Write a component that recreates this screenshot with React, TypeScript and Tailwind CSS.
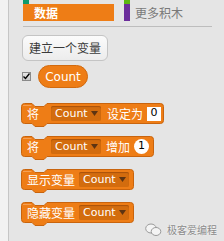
import React from 'react';

const cjk = "font-['Noto_Sans_CJK_SC',sans-serif]";
const latin = "font-['DejaVu_Sans','Noto_Sans_CJK_SC',sans-serif]";

const BlockShape: React.FC<{ w: number }> = ({ w }) => {
  const h = 21;
  const d = `M0.5,3.5 Q0.5,0.5 3.5,0.5 L11,0.5 L14,3.5 L23,3.5 L26,0.5 L${w - 3.5},0.5 Q${w - 0.5},0.5 ${w - 0.5},3.5 L${w - 0.5},${h - 3.5} Q${w - 0.5},${h - 0.5} ${w - 3.5},${h - 0.5} L26,${h - 0.5} L23,${h + 2.5} L14,${h + 2.5} L11,${h - 0.5} L3.5,${h - 0.5} Q0.5,${h - 0.5} 0.5,${h - 3.5} Z`;
  return (
    <svg className="absolute left-0 top-0" width={w} height={h + 4} viewBox={`0 0 ${w} ${h + 4}`}>
      <path d={d} fill="#ee7d16" stroke="#c9640d" strokeWidth="1" />
      <path d={`M2,2.5 L10.5,2.5`} stroke="#f5a055" strokeWidth="1" />
    </svg>
  );
};

const Dropdown: React.FC = () => (
  <div className="flex items-center justify-between w-[50px] h-[15px] rounded-[2px] bg-[#d36c0e] shadow-[inset_0_1px_1px_#a9530a] pl-[4px] pr-[3px]">
    <span className={`${latin} text-[11px] leading-none text-white`}>Count</span>
    <svg width="7" height="5" viewBox="0 0 7 5">
      <path d="M0,0 L7,0 L3.5,5 Z" fill="#5e3412" />
    </svg>
  </div>
);

const Block: React.FC<{ w: number; children: React.ReactNode }> = ({ w, children }) => (
  <div className="relative h-[25px] ml-[12px]" style={{ width: w }}>
    <BlockShape w={w} />
    <div className={`relative flex items-center h-[21px] pl-[6px] ${cjk} text-[12px] text-white`}>{children}</div>
  </div>
);

export default function App() {
  return (
    <div className="flex w-[224px] h-[241px] overflow-hidden bg-[#e5e5e5]">
      <div className="w-[8px] shrink-0 bg-[#f2f2f2] border-r border-[#c6c6c6] box-content" />
      <div className="relative flex-1 flex flex-col">
        <div className="flex h-[4px] ml-[14px]">
          <div className="w-[6px] bg-[#0e9a6c]" />
          <div className="w-[6px] ml-[95px] bg-[#5cb712]" />
        </div>
        <div className="flex h-[17px] ml-[14px]">
          <div className={`w-[91px] bg-[#ee7d16] pl-[11px] flex items-center ${cjk} text-[12px] font-bold text-white`}>数据</div>
          <div className="w-[6px] ml-[10px] bg-[#6b2d9b]" />
          <div className={`ml-[5px] flex items-center ${cjk} text-[12px] text-[#7a7a7a]`}>更多积木</div>
        </div>
        <div className="mt-[5px] ml-[14px] w-[189px] h-[1px] bg-[#bdbdbd]" />
        <button className={`mt-[8px] ml-[13px] w-[86px] h-[26px] rounded-[6px] border border-[#c4c4c4] bg-gradient-to-b from-[#fbfbfb] to-[#ececec] ${cjk} text-[12px] text-[#3a3a3a] text-left pl-[6px]`}>
          建立一个变量
        </button>
        <div className="mt-[4px] ml-[13px] flex items-center h-[23px]">
          <div className="w-[9px] h-[9px] border border-[#8a8a8a] bg-gradient-to-b from-[#e8e8e8] to-[#c8c8c8] flex items-center justify-center">
            <svg width="7" height="7" viewBox="0 0 7 7">
              <path d="M0.5,3.5 L2.5,5.5 L6.5,0.5" stroke="#000" strokeWidth="1.3" fill="none" />
            </svg>
          </div>
          <div className={`ml-[7px] w-[50px] h-[23px] rounded-full bg-[#ee7d16] border border-[#d26a0e] flex items-center justify-center ${latin} text-[12px] text-white`}>
            Count
          </div>
        </div>
        <div className="mt-[15px] flex flex-col gap-[8px]">
          <Block w={143}>
            <span className="w-[24px]">将</span>
            <Dropdown />
            <span className="ml-[6px]">设定为</span>
            <div className={`ml-[4px] w-[14px] h-[14px] bg-white flex items-center justify-center ${latin} text-[11px] text-black`}>0</div>
          </Block>
          <Block w={133}>
            <span className="w-[24px]">将</span>
            <Dropdown />
            <span className="ml-[5px]">增加</span>
            <div className={`ml-[4px] w-[15px] h-[15px] rounded-full bg-white flex items-center justify-center ${latin} text-[11px] text-black`}>1</div>
          </Block>
          <Block w={113}>
            <span className="w-[52px]">显示变量</span>
            <Dropdown />
          </Block>
          <Block w={113}>
            <span className="w-[52px]">隐藏变量</span>
            <Dropdown />
          </Block>
        </div>
        <div className="absolute left-[136px] top-[222px] flex items-center gap-[5px]">
          <svg width="17" height="14" viewBox="0 0 17 14">
            <ellipse cx="6" cy="5.5" rx="5.3" ry="4.5" fill="#f4f4f4" stroke="#9a9a9a" strokeWidth="1" />
            <ellipse cx="11" cy="8.5" rx="4.8" ry="4" fill="#f4f4f4" stroke="#9a9a9a" strokeWidth="1" />
          </svg>
          <span className={`${cjk} text-[10px] text-[#8a8a8a] [text-shadow:0_0_2px_#fff]`}>极客爱编程</span>
        </div>
      </div>
    </div>
  );
}
